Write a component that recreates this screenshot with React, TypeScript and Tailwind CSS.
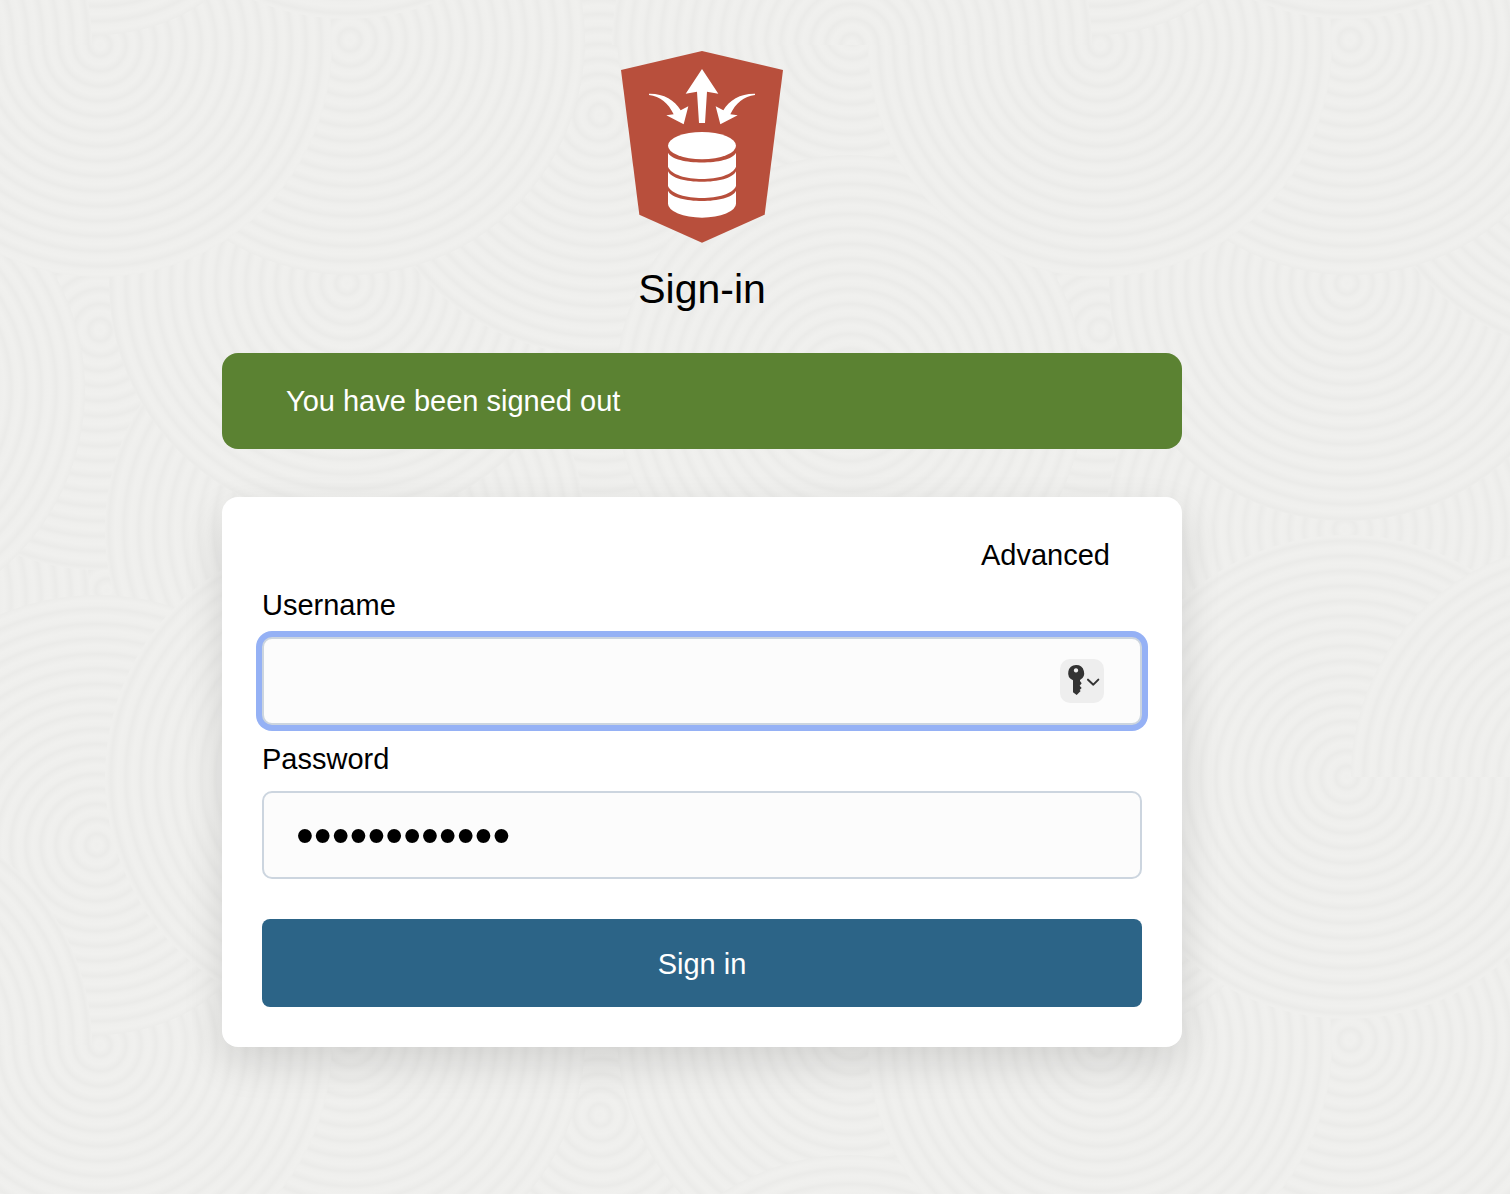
import React from 'react';

const TILE = 1000;

type Disc = { x: number; y: number; r: number; upper?: boolean };

// Overlapping discs of the sand texture, in painting order. An "upper" disc shows only its top half.
const DISCS: Disc[] = [
  { x: 600, y: 530, r: 240 },
  { x: 107, y: 590, r: 240 },
  { x: 850, y: 600, r: 240 },
  { x: 100, y: 330, r: 240 },
  { x: 600, y: 330, r: 240 },
  { x: 345, y: 530, r: 240 },
  { x: 850, y: 845, r: 240 },
  { x: 347, y: 283, r: 238 },
  { x: 600, y: 115, r: 240 },
  { x: 852, y: 33, r: 235 },
  { x: 850, y: 390, r: 235 },
  { x: 350, y: 40, r: 235 },
  { x: 100, y: 45, r: 232 },
  { x: 97, y: 845, r: 190 },
  { x: 97, y: 845, r: 250, upper: true },
  { x: 852, y: 45, r: 240, upper: true },
  { x: 347, y: 777, r: 242 },
  { x: 585, y: 777, r: 234, upper: true },
];

const OFFSETS = [-TILE, 0, TILE];

const COPIES = DISCS.flatMap((disc, i) =>
  OFFSETS.flatMap((dx) =>
    OFFSETS.map((dy) => ({ ...disc, x: disc.x + dx, y: disc.y + dy, id: `ring${i}_${dx}_${dy}` })),
  ),
).filter((d) => d.x + d.r > 0 && d.x - d.r < TILE && d.y + d.r > 0 && d.y - d.r < TILE);

function SandTexture() {
  return (
    <svg className="absolute inset-0 h-full w-full" aria-hidden="true">
      <defs>
        {COPIES.map(({ x, y, id }) => (
          <radialGradient key={id} id={id} gradientUnits="userSpaceOnUse" cx={x} cy={y} r={15} spreadMethod="repeat">
            <stop offset="0" stopColor="#efefed" />
            <stop offset="0.3" stopColor="#f0f0ee" />
            <stop offset="0.5" stopColor="#eeeeec" />
            <stop offset="0.75" stopColor="#ebebe9" />
            <stop offset="1" stopColor="#efefed" />
          </radialGradient>
        ))}
        <pattern id="sand" width={TILE} height={TILE} patternUnits="userSpaceOnUse">
          <rect width={TILE} height={TILE} fill="#eeeeec" />
          {COPIES.map(({ x, y, r, upper, id }) =>
            upper ? (
              <path key={id} d={`M${x - r} ${y} A${r} ${r} 0 0 1 ${x + r} ${y} Z`} fill={`url(#${id})`} />
            ) : (
              <circle key={id} cx={x} cy={y} r={r} fill={`url(#${id})`} />
            ),
          )}
        </pattern>
      </defs>
      <rect width="100%" height="100%" fill="url(#sand)" />
    </svg>
  );
}

function Logo() {
  const side =
    'M147 161 C190 160 224 180 242 211 L265 199 L251 253 L199 226 L221 223 C206 190 180 169 147 165 Z';
  return (
    <svg viewBox="63 33 486 576" className="h-48 w-[162px]" role="img" aria-label="Logo">
      <path d="M306 33 L549 90 L494 524 L306 608 L118 524 L63 90 Z" fill="#b84f3c" />
      <g fill="#fff">
        <path d="M306 87 L355 161 L321 155 L315 249 H297 L291 155 L257 161 Z" />
        <path d={side} />
        <path d={side} transform="translate(612 0) scale(-1 1)" />
        <ellipse cx="306" cy="317" rx="102" ry="41" />
        <path d="M204 338 C222 377 390 377 408 338 V380 C390 429 222 429 204 380 Z" />
        <path d="M204 394 C222 436 390 436 408 394 V438 C390 486 222 486 204 438 Z" />
        <path d="M204 452 C222 493 390 493 408 452 V491 A102 42 0 0 1 204 491 Z" />
      </g>
    </svg>
  );
}

function KeyIcon() {
  return (
    <svg viewBox="180 177 132 132" className="h-11 w-11" aria-hidden="true">
      <path
        fillRule="evenodd"
        fill="#333"
        d="M228 195 a24 24 0 0 1 12 45 V243 L245 250 L239 257 L245 264 L239 270 L242 273 L230 285 L219 277 V241 A24 24 0 0 1 228 195 Z M228 204.500 a6.500 6.500 0 1 0 .01 0 Z"
      />
      <path d="M264 239 L280 254 L295 239" fill="none" stroke="#333" strokeWidth="6" strokeLinecap="round" strokeLinejoin="round" />
    </svg>
  );
}

const field = 'block h-[88px] w-full rounded-[10px] border-2 border-[#ccd5df] bg-[#fcfcfc] px-8 outline-none';

export default function App() {
  return (
    <div className="relative min-h-screen bg-[#efeeec] font-['Liberation_Sans',Arial,sans-serif] text-[29px] text-black">
      <SandTexture />
      <main className="relative flex flex-col items-center pt-[51px] pr-[106px] pb-12">
        <Logo />
        <h1 className="mt-[22px] text-[41px] leading-12">Sign-in</h1>
        <div className="mt-10 flex h-24 w-full max-w-[960px] items-center rounded-2xl bg-[#5b8232] px-16 pt-0.5 text-white" role="status">
          You have been signed out
        </div>
        <form
          className="mt-12 w-full max-w-[960px] rounded-2xl bg-white p-10 shadow-[0_16px_40px_rgba(0,0,0,0.12)]"
          onSubmit={(e) => e.preventDefault()}
        >
          <div className="flex justify-end pr-8 leading-9">
            <a href="#advanced">Advanced</a>
          </div>
          <label htmlFor="username" className="block leading-16">
            Username
          </label>
          <div className="relative">
            <input id="username" type="text" autoComplete="off" className={`${field} ring-6 ring-[#95b1f5]`} />
            <button
              type="button"
              aria-label="Fill saved password"
              className="absolute top-[22px] right-[38px] rounded-[10px] bg-[#eeeeee]"
            >
              <KeyIcon />
            </button>
          </div>
          <label htmlFor="password" className="mt-0.5 block leading-16">
            Password
          </label>
          <input id="password" type="password" defaultValue="abcdefghijkl" className={`${field} text-[51px]`} />
          <button type="submit" className="mt-10 block h-[88px] w-full rounded-lg bg-[#2c6487] pt-1 text-white">
            Sign in
          </button>
        </form>
      </main>
    </div>
  );
}
